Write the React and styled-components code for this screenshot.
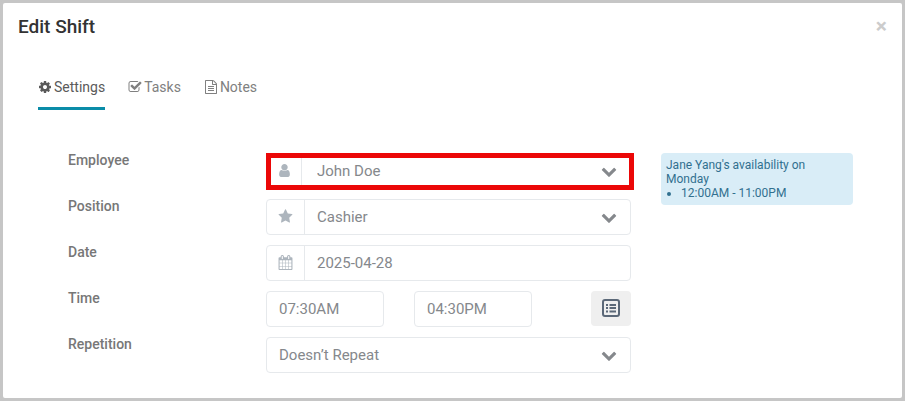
import React, { useState } from "react";
import styled, { createGlobalStyle } from "styled-components";

// icon paths, all on a 1792 grid
const icons = {
  cog: "M1152 896q0-106-75-181t-181-75-181 75-75 181 75 181 181 75 181-75 75-181zm512-109v222q0 12-8 23t-20 13l-185 28q-19 54-39 91 35 50 107 138 10 12 10 25t-9 23q-27 37-99 108t-94 71q-12 0-26-9l-138-108q-44 23-91 38-16 136-29 186-7 28-36 28h-222q-14 0-24.5-8.5t-11.5-21.5l-28-184q-49-16-90-37l-141 107q-10 9-25 9-14 0-25-11-126-114-165-168-7-10-7-23 0-12 8-23 15-21 51-66.5t54-70.5q-27-50-41-99l-183-27q-13-2-21-12.5t-8-23.5v-222q0-12 8-23t19-13l186-28q14-46 39-92-40-57-107-138-10-12-10-24 0-10 9-23 26-36 98.5-107.5t94.5-71.5q13 0 26 10l138 107q44-23 91-38 16-136 29-186 7-28 36-28h222q14 0 24.5 8.5t11.5 21.5l28 184q49 16 90 37l142-107q9-9 24-9 13 0 25 10 129 119 165 170 7 8 7 22 0 12-8 23-15 21-51 66.5t-54 70.5q26 50 41 98l183 28q13 2 21 12.5t8 23.5z",
  check:
    "M1472 930v318q0 119-84.5 203.5t-203.5 84.5h-832q-119 0-203.5-84.5t-84.5-203.5v-832q0-119 84.5-203.5t203.5-84.5h832q63 0 117 25 15 7 18 23 3 17-9 29l-49 49q-10 10-23 10-3 0-9-2-23-6-45-6h-832q-66 0-113 47t-47 113v832q0 66 47 113t113 47h832q66 0 113-47t47-113v-254q0-13 9-22l64-64q10-10 23-10 6 0 12 3 20 8 20 29zm231-489l-814 814q-24 24-57 24t-57-24l-430-430q-24-24-24-57t24-57l110-110q24-24 57-24t57 24l263 263 647-647q24-24 57-24t57 24l110 110q24 24 24 57t-24 57z",
  file: "M1596 380q28 28 48 76t20 88v1152q0 40-28 68t-68 28h-1344q-40 0-68-28t-28-68v-1600q0-40 28-68t68-28h896q40 0 88 20t76 48zm-444-244v376h376q-10-29-22-41l-313-313q-12-12-41-22zm384 1528v-1024h-416q-40 0-68-28t-28-68v-416h-768v1536h1280zm-1024-864q0-14 9-23t23-9h704q14 0 23 9t9 23v64q0 14-9 23t-23 9h-704q-14 0-23-9t-9-23v-64zm736 224q14 0 23 9t9 23v64q0 14-9 23t-23 9h-704q-14 0-23-9t-9-23v-64q0-14 9-23t23-9h704zm0 256q14 0 23 9t9 23v64q0 14-9 23t-23 9h-704q-14 0-23-9t-9-23v-64q0-14 9-23t23-9h704z",
  user: "M1536 1399q0 109-62.5 187t-150.5 78h-854q-88 0-150.5-78t-62.5-187q0-85 8.5-160.5t31.5-152 58.5-131 94-89 134.5-34.5q131 128 313 128t313-128q76 0 134.5 34.5t94 89 58.5 131 31.5 152 8.5 160.5zm-256-887q0 159-112.5 271.5t-271.5 112.5-271.5-112.5-112.5-271.5 112.5-271.5 271.5-112.5 271.5 112.5 112.5 271.5z",
  star: "M1728 647q0 22-26 48l-363 354 86 500q1 7 1 20 0 21-10.5 35.5t-30.5 14.5q-19 0-40-12l-449-236-449 236q-22 12-40 12-21 0-31.5-14.5t-10.5-35.5q0-6 2-20l86-500-364-354q-25-27-25-48 0-37 56-46l502-73 225-455q19-41 49-41t49 41l225 455 502 73q56 9 56 46z",
  calendar:
    "M192 1664h288v-288h-288v288zm352 0h320v-288h-320v288zm-352-352h288v-320h-288v320zm352 0h320v-320h-320v320zm-352-384h288v-288h-288v288zm736 736h320v-288h-320v288zm-384-736h320v-288h-320v288zm768 736h288v-288h-288v288zm-384-352h320v-320h-320v320zm-352-864v-288q0-13-9.5-22.5t-22.5-9.5h-64q-13 0-22.5 9.5t-9.5 22.5v288q0 13 9.5 22.5t22.5 9.5h64q13 0 22.5-9.5t9.5-22.5zm736 864h288v-320h-288v320zm-384-384h320v-288h-320v288zm384 0h288v-288h-288v288zm32-480v-288q0-13-9.5-22.5t-22.5-9.5h-64q-13 0-22.5 9.5t-9.5 22.5v288q0 13 9.5 22.5t22.5 9.5h64q13 0 22.5-9.5t9.5-22.5zm384-64v1280q0 52-38 90t-90 38h-1408q-52 0-90-38t-38-90v-1280q0-52 38-90t90-38h128v-96q0-66 47-113t113-47h64q66 0 113 47t47 113v96h384v-96q0-66 47-113t113-47h64q66 0 113 47t47 113v96h128q52 0 90 38t38 90z",
  chevron:
    "M1683 808l-742 741q-19 19-45 19t-45-19l-742-741q-19-19-19-45.5t19-45.5l166-165q19-19 45-19t45 19l531 531 531-531q19-19 45-19t45 19l166 165q19 19 19 45.5t-19 45.5z",
};

const Icon = ({ name, size = 14 }) => (
  <svg
    width={size}
    height={size}
    viewBox="0 0 1792 1792"
    fill="currentColor"
    aria-hidden="true"
  >
    <path d={icons[name]} />
  </svg>
);

const ListIcon = () => (
  <svg width="18" height="18" viewBox="0 0 18 18" aria-hidden="true">
    <rect
      x="1"
      y="1"
      width="16"
      height="16"
      rx="2"
      fill="none"
      stroke="currentColor"
      strokeWidth="2"
    />
    <path
      d="M4 5h2v2H4zM7.5 5H14v2H7.5zM4 8h2v2H4zM7.5 8H14v2H7.5zM4 11.5h2v2H4zM7.5 11.5H14v2H7.5z"
      fill="currentColor"
    />
  </svg>
);

const tabs = [
  { id: "settings", label: "Settings", icon: "cog" },
  { id: "tasks", label: "Tasks", icon: "check" },
  { id: "notes", label: "Notes", icon: "file" },
];

const SelectField = ({ id, icon, options, highlighted }) => (
  <Control $highlighted={highlighted}>
    {icon && (
      <Addon $narrow={highlighted}>
        <Icon name={icon} size={15} />
      </Addon>
    )}
    <Select id={id} $indent={highlighted}>
      {options.map((option) => (
        <option key={option}>{option}</option>
      ))}
    </Select>
    <Arrow>
      <Icon name="chevron" size={16} />
    </Arrow>
  </Control>
);

const App = () => {
  const [activeTab, setActiveTab] = useState("settings");
  const [date, setDate] = useState("2025-04-28");
  const [start, setStart] = useState("07:30AM");
  const [end, setEnd] = useState("04:30PM");

  return (
    <>
      <GlobalStyle />
      <Modal>
        <Header>
          <Title>Edit Shift</Title>
          <CloseBtn type="button" aria-label="Close">
            ×
          </CloseBtn>
        </Header>

        <Tabs role="tablist">
          {tabs.map((tab) => (
            <Tab
              key={tab.id}
              type="button"
              role="tab"
              aria-selected={activeTab === tab.id}
              $active={activeTab === tab.id}
              onClick={() => setActiveTab(tab.id)}
            >
              <Icon name={tab.icon} />
              {tab.label}
            </Tab>
          ))}
        </Tabs>

        <Content>
          <Form>
            <Row>
              <Label htmlFor="employee">Employee</Label>
              <SelectField
                id="employee"
                icon="user"
                options={["John Doe", "Jane Yang"]}
                highlighted
              />
            </Row>
            <Row>
              <Label htmlFor="position">Position</Label>
              <SelectField id="position" icon="star" options={["Cashier"]} />
            </Row>
            <Row>
              <Label htmlFor="date">Date</Label>
              <Control>
                <Addon>
                  <Icon name="calendar" size={15} />
                </Addon>
                <Input
                  id="date"
                  type="text"
                  value={date}
                  onChange={(e) => setDate(e.target.value)}
                />
              </Control>
            </Row>
            <Row>
              <Label htmlFor="start">Time</Label>
              <TimeWrap>
                <TimeControl>
                  <Input
                    id="start"
                    type="text"
                    value={start}
                    onChange={(e) => setStart(e.target.value)}
                  />
                </TimeControl>
                <TimeControl>
                  <Input
                    type="text"
                    aria-label="End time"
                    value={end}
                    onChange={(e) => setEnd(e.target.value)}
                  />
                </TimeControl>
                <ListBtn type="button" aria-label="Shift templates">
                  <ListIcon />
                </ListBtn>
              </TimeWrap>
            </Row>
            <Row>
              <Label htmlFor="repetition">Repetition</Label>
              <SelectField id="repetition" options={["Doesn’t Repeat"]} />
            </Row>
          </Form>

          <Availability>
            Jane Yang's availability on Monday
            <Hours>
              <li>12:00AM - 11:00PM</li>
            </Hours>
          </Availability>
        </Content>
      </Modal>
    </>
  );
};

const GlobalStyle = createGlobalStyle`
  * {
    box-sizing: border-box;
  }
  body {
    margin: 0;
    background: #c6c6c6;
    font-family: Roboto, "Liberation Sans", sans-serif;
  }
  button, input, select {
    font-family: inherit;
  }
`;

const Modal = styled.main`
  min-height: 100vh;
  padding-bottom: 25px;
  background: white;
  border: 3px solid #c6c6c6;
  border-radius: 5px;
`;

const Header = styled.header`
  display: flex;
  justify-content: space-between;
  align-items: flex-start;
  padding: 14px 15px 0;
`;

const Title = styled.h1`
  margin: 0;
  font-size: 19px;
  font-weight: 500;
  line-height: 20px;
  color: #333333;
`;

const CloseBtn = styled.button`
  padding: 0;
  border: none;
  background: transparent;
  font-size: 21px;
  font-weight: 700;
  line-height: 18px;
  color: #cccccc;
  cursor: pointer;
  &:hover {
    color: #888888;
  }
`;

const Tabs = styled.div`
  display: flex;
  gap: 23px;
  margin: 40px 35px 0;
`;

const Tab = styled.button`
  display: flex;
  align-items: center;
  gap: 2px;
  padding: 0 0 10px;
  border: none;
  border-bottom: 3px solid ${({ $active }) => ($active ? "#0a8ca8" : "transparent")};
  background: transparent;
  font-size: 14px;
  line-height: 20px;
  color: ${({ $active }) => ($active ? "#5a5a5a" : "#808080")};
  cursor: pointer;
`;

const Content = styled.div`
  display: flex;
  align-items: flex-start;
  gap: 30px;
  margin: 43px 49px 0 65px;
`;

const Form = styled.form`
  flex: 1;
  min-width: 0;
  display: flex;
  flex-direction: column;
  gap: 10px;
`;

const Row = styled.div`
  display: grid;
  grid-template-columns: 198px minmax(0, 1fr);
  align-items: start;
`;

const Label = styled.label`
  font-size: 14px;
  font-weight: 500;
  line-height: 14px;
  color: #777777;
`;

const Control = styled.div`
  position: relative;
  display: flex;
  height: 36px;
  background: white;
  border: 1px solid #e6e9ec;
  border-radius: 4px;

  ${({ $highlighted }) =>
    $highlighted &&
    `
    &::after {
      content: "";
      position: absolute;
      inset: -1px -4px -2px -1px;
      border: 5px solid #eb0707;
      pointer-events: none;
    }
  `}
`;

const Addon = styled.span`
  flex: none;
  width: ${({ $narrow }) => ($narrow ? "35px" : "38px")};
  display: flex;
  justify-content: center;
  align-items: center;
  padding-bottom: 2px;
  border-right: 1px solid #e6e9ec;
  color: #adb5bd;
`;

const Input = styled.input`
  flex: 1;
  min-width: 0;
  padding: 0 12px;
  border: none;
  outline: none;
  background: transparent;
  font-size: 15px;
  color: #85888c;
`;

const Select = styled(Input).attrs({ as: "select" })`
  appearance: none;
  padding: 0 40px 0 ${({ $indent }) => ($indent ? "15px" : "12px")};
`;

const Arrow = styled.span`
  position: absolute;
  right: 13px;
  top: 9px;
  display: flex;
  color: #85888c;
  pointer-events: none;
`;

const TimeWrap = styled.div`
  display: flex;
  gap: 30px;
`;

const TimeControl = styled(Control)`
  width: 118px;
`;

const ListBtn = styled.button`
  display: flex;
  justify-content: center;
  align-items: center;
  width: 40px;
  height: 35px;
  margin-left: auto;
  padding: 0 1px 1px 0;
  border: none;
  border-radius: 4px;
  background: #efefef;
  color: #5b6878;
  cursor: pointer;
`;

const Availability = styled.aside`
  flex: none;
  width: 192px;
  padding: 5px;
  background: #d9edf7;
  border-radius: 4px;
  font-size: 12px;
  line-height: 14px;
  color: #31708f;
`;

const Hours = styled.ul`
  margin: 0;
  padding-left: 15px;
`;

export default App;
